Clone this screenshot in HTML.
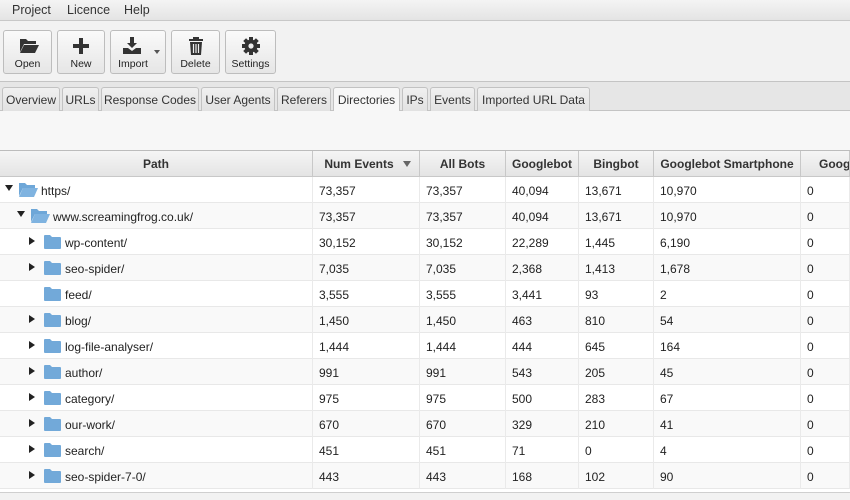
<!DOCTYPE html>
<html style="overflow:hidden;width:850px;height:500px"><head><meta charset="utf-8"><style>
*{box-sizing:border-box;margin:0;padding:0}
body{width:850px;height:500px;overflow:hidden;background:#f2f2f2;font-family:"Liberation Sans",sans-serif;font-size:12px;color:#222;position:relative}
.abs{position:absolute}
#menu{left:0;top:0;width:850px;height:21px;background:linear-gradient(#f4f4f4,#e4e4e4);border-bottom:1px solid #c8c8c8}
#menu span{position:absolute;top:3px;font-size:12.5px;color:#333}
#tool{left:0;top:22px;width:850px;height:60px;background:#f2f2f2;border-bottom:1px solid #c4c4c4}
.btn{position:absolute;top:8px;height:44px;border:1px solid #bdbdbd;border-radius:3px;background:linear-gradient(#fafafa,#e6e6e6);text-align:center;font-size:10.5px;color:#222}
.btn svg{position:absolute;left:50%;top:5px;margin-left:-10px}
.btn .l{position:absolute;left:0;right:0;bottom:3px}
#tabs{left:0;top:82px;width:850px;height:29px;background:#e6e6e6;border-bottom:1px solid #c4c4c4}
.tab{position:absolute;top:5px;height:24px;border:1px solid #c2c2c2;border-bottom:none;border-radius:3px 3px 0 0;background:linear-gradient(#f0f0f0,#e2e2e2);font-size:12px;color:#333;padding-top:5px;text-align:center;white-space:nowrap}
.tab.sel{background:#f7f7f7;height:25px}
#blank{left:0;top:111px;width:850px;height:40px;background:#f7f7f7;border-bottom:1px solid #bcbcbc}
#hdr{left:0;top:151px;width:850px;height:26px;background:linear-gradient(#f5f5f5,#e4e4e4);border-bottom:1px solid #c8c8c8}
.h{position:absolute;top:0;height:26px;border-right:1px solid #c8c8c8;font-weight:bold;font-size:12px;color:#333;text-align:center;padding-top:6px;white-space:nowrap;overflow:hidden}
.row{position:absolute;left:0;width:850px;height:26px;border-bottom:1px solid #e8e8e8;background:#fff}
.row.alt{background:#f9f9f9}
.c{position:absolute;top:0;height:26px;border-right:1px solid #eaeaea;padding:7px 0 0 6px;font-size:12px;color:#222}
.p{position:absolute;top:7px;font-size:12px}
.tri{position:absolute;width:0;height:0}
.tr{border-top:4px solid transparent;border-bottom:4px solid transparent;border-left:6px solid #222;top:8px}
.td{border-left:4px solid transparent;border-right:4px solid transparent;border-top:6px solid #222;top:8px}
.fold{position:absolute;top:5px;width:19px;height:15px}
#bot{left:0;top:492px;width:850px;height:8px;background:#f2f2f2;border-top:1px solid #cfcfcf;z-index:5}
#strip{left:0;top:489px;width:850px;height:3px;background:#fff}
</style></head><body>
<div id="menu" class="abs"><span style="left:12px">Project</span><span style="left:67px">Licence</span><span style="left:124px">Help</span></div>
<div id="tool" class="abs">
<div class="btn" style="left:3px;width:49px"><svg width="22" height="20" viewBox="0 0 22 20"><path d="M2 3h6l2 2h8v3H6L2 16z" fill="#333"/><path d="M6 9h15l-4 8H2z" fill="#333"/></svg><div class="l">Open</div></div>
<div class="btn" style="left:57px;width:48px"><svg width="20" height="20" viewBox="0 0 20 20"><path d="M8 2h4v6h6v4h-6v6H8v-6H2V8h6z" fill="#333"/></svg><div class="l">New</div></div>
<div class="btn" style="left:110px;width:56px"><svg width="22" height="20" viewBox="0 0 22 20" style="margin-left:-16px"><path d="M8 1h4v6h3l-5 5-5-5h3z" fill="#333"/><path d="M1 12h5l4 3 4-3h5v6H1z" fill="#333"/></svg><div style="position:absolute;left:43px;top:19px;border-left:3px solid transparent;border-right:3px solid transparent;border-top:4px solid #555"></div><div class="l" style="padding-right:10px">Import</div></div>
<div class="btn" style="left:171px;width:49px"><svg width="20" height="20" viewBox="0 0 20 20"><path d="M7 1h6v2h4v2H3V3h4z" fill="#333"/><path d="M4 6h12l-1 13H5z" fill="#333"/><path d="M7.5 8v9M10 8v9M12.5 8v9" stroke="#eee" stroke-width="1.2"/></svg><div class="l">Delete</div></div>
<div class="btn" style="left:225px;width:51px"><svg width="20" height="20" viewBox="0 0 20 20"><g fill="#333"><circle cx="10" cy="10" r="6.5"/><rect x="8" y="1" width="4" height="18"/><rect x="1" y="8" width="18" height="4"/><rect x="8" y="1" width="4" height="18" transform="rotate(45 10 10)"/><rect x="8" y="1" width="4" height="18" transform="rotate(-45 10 10)"/></g><circle cx="10" cy="10" r="2.6" fill="#eee"/></svg><div class="l">Settings</div></div>
</div>
<div id="tabs" class="abs">
<div class="tab" style="left:2px;width:58px">Overview</div>
<div class="tab" style="left:62px;width:37px">URLs</div>
<div class="tab" style="left:101px;width:98px">Response Codes</div>
<div class="tab" style="left:201px;width:74px">User Agents</div>
<div class="tab" style="left:277px;width:54px">Referers</div>
<div class="tab sel" style="left:333px;width:67px">Directories</div>
<div class="tab" style="left:402px;width:26px">IPs</div>
<div class="tab" style="left:430px;width:45px">Events</div>
<div class="tab" style="left:477px;width:113px">Imported URL Data</div>
</div>
<div id="blank" class="abs"></div>
<div id="hdr" class="abs">
<div class="h" style="left:0;width:313px">Path</div>
<div class="h" style="left:313px;width:107px;padding-right:14px">Num Events<span style="position:absolute;right:8px;top:10px;border-left:4px solid transparent;border-right:4px solid transparent;border-top:6px solid #666"></span></div>
<div class="h" style="left:420px;width:86px">All Bots</div>
<div class="h" style="left:506px;width:73px">Googlebot</div>
<div class="h" style="left:579px;width:75px">Bingbot</div>
<div class="h" style="left:654px;width:147px">Googlebot Smartphone</div>
<div class="h" style="left:801px;width:49px;text-align:left;padding-left:18px">Goog</div>
</div>
<div id="rows"></div>
<div id="strip" class="abs"></div>
<div id="bot" class="abs"></div>
<script>
var d=[["https/",0,"d",1,"73,357","73,357","40,094","13,671","10,970"],
["www.screamingfrog.co.uk/",1,"d",1,"73,357","73,357","40,094","13,671","10,970"],
["wp-content/",2,"r",0,"30,152","30,152","22,289","1,445","6,190"],
["seo-spider/",2,"r",0,"7,035","7,035","2,368","1,413","1,678"],
["feed/",2,"",0,"3,555","3,555","3,441","93","2"],
["blog/",2,"r",0,"1,450","1,450","463","810","54"],
["log-file-analyser/",2,"r",0,"1,444","1,444","444","645","164"],
["author/",2,"r",0,"991","991","543","205","45"],
["category/",2,"r",0,"975","975","500","283","67"],
["our-work/",2,"r",0,"670","670","329","210","41"],
["search/",2,"r",0,"451","451","71","0","4"],
["seo-spider-7-0/",2,"r",0,"443","443","168","102","90"]];
var L=[313,420,506,579,654,801],W=[107,86,73,75,147,49],h="";
d.forEach(function(r,i){var top=177+26*i;h+='<div class="row'+(i%2?' alt':'')+'" style="top:'+top+'px">';
h+='<div class="c" style="left:0;width:313px;padding:0">';
var x=5+r[1]*12;
if(r[2]=="d")h+='<div class="tri td" style="left:'+x+'px"></div>';
if(r[2]=="r")h+='<div class="tri tr" style="left:'+x+'px"></div>';
var fx=r[1]==2?43:19+r[1]*12;
if(r[3])h+='<svg class="fold" style="left:'+fx+'px" viewBox="0 0 19 15"><path d="M0 1h6l2 2h8v3H4L0 14z" fill="#6ea7d8"/><path d="M4 6h15l-4 9H0z" fill="#7fb3e0"/></svg>';
else h+='<svg class="fold" style="left:'+fx+'px" viewBox="0 0 19 15"><path d="M1 2q0-1 1-1h5l2 2h8q1 0 1 1v10q0 1-1 1H2q-1 0-1-1z" fill="#72a9d9"/></svg>';
h+='<span class="p" style="left:'+(fx+22)+'px">'+r[0]+'</span>';
h+='</div>';
for(var k=0;k<6;k++)h+='<div class="c" style="left:'+L[k]+'px;width:'+W[k]+'px">'+(k<5?r[4+k]:"0")+'</div>';
h+='</div>';});
document.getElementById('rows').innerHTML=h;
</script>
</body></html>
